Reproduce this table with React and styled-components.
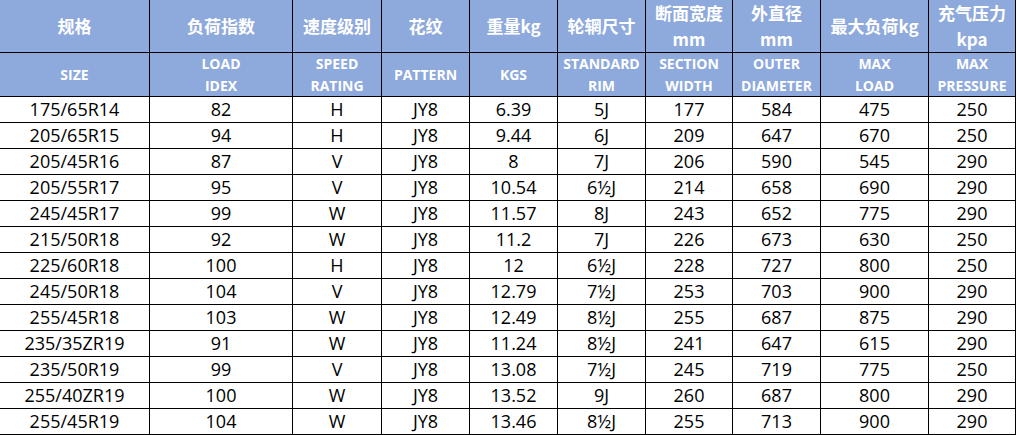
import React from "react";
import styled, { createGlobalStyle } from "styled-components";

const GlobalStyle = createGlobalStyle`
  html, body { margin: 0; padding: 0; background: #fff; }
  body { font-family: "Open Sans", "Noto Sans CJK SC", sans-serif; }
`;

const COLS = "149px 142px 88px 87px 87px 87px 86px 87px 107px 86px";

const Grid = styled.div`
  display: grid;
  grid-template-columns: ${COLS};
  grid-template-rows: 52px 43px repeat(13, 25px);
  gap: 1px;
  background: #000;
  width: max-content;
  padding: 0 1px 1px 0;
`;

const HeadCell = styled.div`
  background: #8ea9db;
  color: #fff;
  font-weight: 700;
  display: flex;
  flex-direction: column;
  align-items: center;
  justify-content: center;
  text-align: center;
  font-family: ${(p) => (p.$cn ? '"Noto Sans CJK SC", "Open Sans", sans-serif' : '"Open Sans", "Noto Sans CJK SC", sans-serif')};
  font-size: ${(p) => (p.$cn ? "17px" : "14px")};
  line-height: ${(p) => (p.$cn ? "26px" : "22px")};
  white-space: nowrap;
`;

const Cell = styled.div`
  background: #fff;
  color: #000;
  font-size: 18px;
  line-height: 25px;
  text-align: center;
  white-space: nowrap;
`;

const cnHead = [
  ["规格"],
  ["负荷指数"],
  ["速度级别"],
  ["花纹"],
  ["重量kg"],
  ["轮辋尺寸"],
  ["断面宽度", "mm"],
  ["外直径", "mm"],
  ["最大负荷kg"],
  ["充气压力", "kpa"],
];

const enHead = [
  ["SIZE"],
  ["LOAD", "IDEX"],
  ["SPEED", "RATING"],
  ["PATTERN"],
  ["KGS"],
  ["STANDARD", "RIM"],
  ["SECTION", "WIDTH"],
  ["OUTER", "DIAMETER"],
  ["MAX", "LOAD"],
  ["MAX", "PRESSURE"],
];

const rows = [
  ["175/65R14", "82", "H", "JY8", "6.39", "5J", "177", "584", "475", "250"],
  ["205/65R15", "94", "H", "JY8", "9.44", "6J", "209", "647", "670", "250"],
  ["205/45R16", "87", "V", "JY8", "8", "7J", "206", "590", "545", "290"],
  ["205/55R17", "95", "V", "JY8", "10.54", "6½J", "214", "658", "690", "290"],
  ["245/45R17", "99", "W", "JY8", "11.57", "8J", "243", "652", "775", "290"],
  ["215/50R18", "92", "W", "JY8", "11.2", "7J", "226", "673", "630", "250"],
  ["225/60R18", "100", "H", "JY8", "12", "6½J", "228", "727", "800", "250"],
  ["245/50R18", "104", "V", "JY8", "12.79", "7½J", "253", "703", "900", "290"],
  ["255/45R18", "103", "W", "JY8", "12.49", "8½J", "255", "687", "875", "290"],
  ["235/35ZR19", "91", "W", "JY8", "11.24", "8½J", "241", "647", "615", "290"],
  ["235/50R19", "99", "V", "JY8", "13.08", "7½J", "245", "719", "775", "250"],
  ["255/40ZR19", "100", "W", "JY8", "13.52", "9J", "260", "687", "800", "290"],
  ["255/45R19", "104", "W", "JY8", "13.46", "8½J", "255", "713", "900", "290"],
];

export default function App() {
  return (
    <>
      <GlobalStyle />
      <Grid>
        {cnHead.map((lines, i) => (
          <HeadCell $cn key={"c" + i}>
            {lines.map((l) => (
              <span key={l}>{l}</span>
            ))}
          </HeadCell>
        ))}
        {enHead.map((lines, i) => (
          <HeadCell key={"e" + i}>
            {lines.map((l) => (
              <span key={l}>{l}</span>
            ))}
          </HeadCell>
        ))}
        {rows.map((r, ri) =>
          r.map((v, ci) => <Cell key={ri + "-" + ci}>{v}</Cell>)
        )}
      </Grid>
    </>
  );
}
